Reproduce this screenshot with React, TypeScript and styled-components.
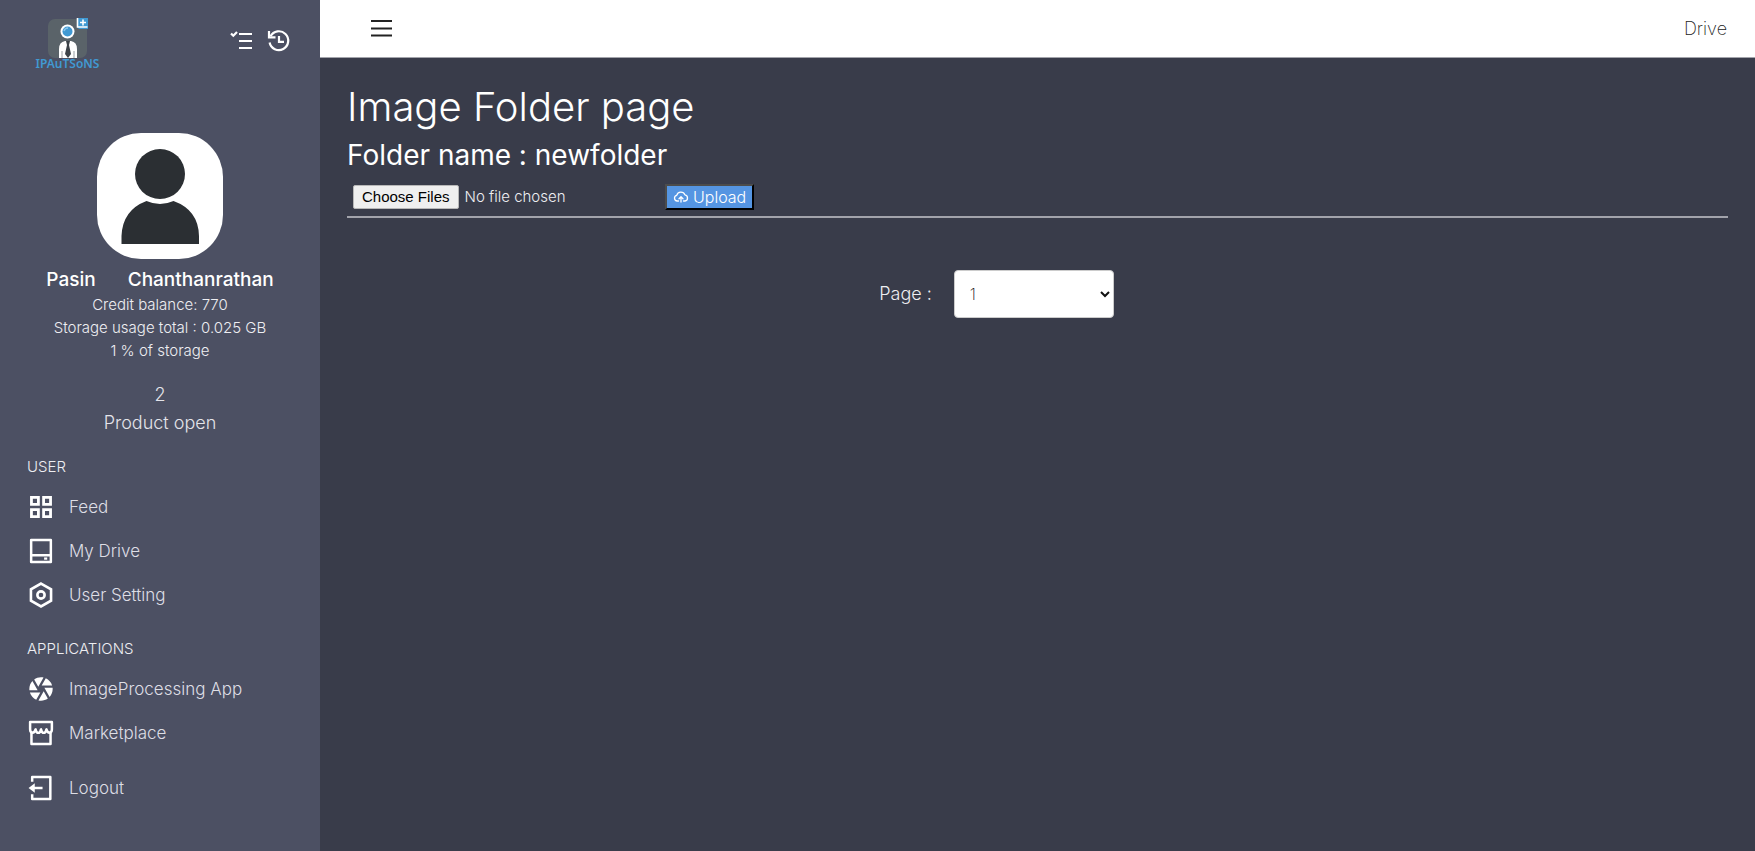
import React from "react";
import styled, { createGlobalStyle } from "styled-components";
import { RiCameraLensFill } from "react-icons/ri";

const GlobalStyle = createGlobalStyle`
  *, *::before, *::after { box-sizing: border-box; }
  body {
    margin: 0;
    background: #393c4a;
    color: #ffffff;
    font-family: Inter, "Open Sans", sans-serif;
    font-weight: 300;
    font-size: 16px;
    line-height: 24px;
  }
  h1, h2, h3, p, ul { margin: 0; padding: 0; }
`;

const Shell = styled.div`
  display: grid;
  grid-template-columns: 320px 1fr;
  min-height: 100vh;
`;

const Sidebar = styled.aside`
  background: #4c5063;
  padding: 16px 27px 32px;
`;

const Brand = styled.div`
  display: flex;
  justify-content: space-between;
  align-items: flex-start;
  height: 117px;
  padding: 0 2px 0 5px;
`;

const BrandActions = styled.div`
  display: flex;
  gap: 12px;
  padding: 12px 0 0;
`;

const IconButton = styled.button`
  display: flex;
  padding: 0;
  border: 0;
  background: none;
  color: inherit;
  cursor: pointer;
`;

const Profile = styled.section`
  display: flex;
  flex-direction: column;
  align-items: center;
  text-align: center;
`;

const Avatar = styled.svg`
  display: block;
  width: 126px;
  height: 126px;
  margin-bottom: 8px;
  border-radius: 44px;
  background: #ffffff;
`;

const Names = styled.h3`
  display: flex;
  gap: 32px;
  font-size: 19px;
  line-height: 26px;
  font-weight: 500;
`;

const Detail = styled.p`
  font-size: 15px;
  line-height: 23px;
  color: #eeeef2;
`;

const Products = styled.p`
  margin-top: 19px;
  font-size: 18px;
  line-height: 28px;
  color: #e4e4ea;
`;

const GroupTitle = styled.h3<{ $spaced?: boolean }>`
  margin-top: ${(p) => (p.$spaced ? 20 : 18)}px;
  font-size: 15px;
  line-height: 24px;
  font-weight: 300;
  color: #eeeef2;
`;

const Menu = styled.ul<{ $gap: number }>`
  list-style: none;
  margin-top: ${(p) => p.$gap}px;
`;

const MenuLink = styled.a`
  display: flex;
  align-items: center;
  gap: 14px;
  height: 44px;
  color: #dedee5;
  font-size: 17px;
  text-decoration: none;
  svg { width: 28px; height: 28px; color: #ffffff; }
`;

const Main = styled.div`
  display: flex;
  flex-direction: column;
  min-width: 0;
`;

const TopBar = styled.header`
  display: flex;
  align-items: center;
  justify-content: space-between;
  height: 58px;
  padding: 0 28px 0 48px;
  background: #ffffff;
  border-bottom: 1px solid #a3a4ab;
  color: #222222;
  font-size: 18px;
  font-weight: 200;
`;

const Content = styled.main`
  padding: 24px 27px;
`;

const Title = styled.h1`
  font-size: 40px;
  line-height: 50px;
  font-weight: 300;
`;

const FolderName = styled.h2`
  font-size: 28px;
  line-height: 46px;
  font-weight: 400;
`;

const UploadForm = styled.form`
  display: flex;
  align-items: center;
  justify-content: flex-start;
  padding: 6px;
  border-bottom: 2px solid #a2a3ab;
`;

const FileInput = styled.input`
  width: 312px;
  height: 26px;
  color: #eeeef2;
  font: 300 15px/24px Inter, "Open Sans", sans-serif;
  &::file-selector-button {
    height: 24px;
    margin: 1px 6px 1px 0;
    padding: 0 8px;
    border: 1px solid #b8b8b8;
    border-radius: 2px;
    background: #efefef;
    color: #000000;
    font: 400 15px/22px "Liberation Sans", Arial, sans-serif;
  }
`;

const UploadButton = styled.button`
  display: flex;
  align-items: center;
  gap: 4px;
  height: 26px;
  padding: 0 6px;
  border: 2px outset #000000;
  border-color: #4c4c4c #000000 #000000 #4c4c4c;
  background: #5595e2;
  color: #ffffff;
  font: 300 16px/22px Inter, "Open Sans", sans-serif;
`;

const Pager = styled.div`
  display: flex;
  align-items: center;
  justify-content: center;
  gap: 22px;
  margin-top: 52px;
  padding-right: 82px;
  font-size: 18px;
  color: #eeeef2;
`;

const PageSelect = styled.select`
  width: 160px;
  height: 48px;
  padding: 0 2px 0 11px;
  border: 1px solid #cccccc;
  border-radius: 4px;
  background: #ffffff;
  color: #111111;
  font: 200 16px/24px Inter, "Open Sans", sans-serif;
`;

const LogoText = styled.text`
  font: 600 12px "Noto Sans", "Open Sans", sans-serif;
  fill: #4199d2;
`;

const Logo = () => (
  <svg width="72" height="56" viewBox="0 0 72 56" role="img" aria-label="IPAuTSoNS">
    <rect x="16" y="3" width="39" height="39" rx="7" fill="#5a6369" />
    <path d="M45 2h11v11h-9l-2-2z" fill="#4199d2" />
    <path d="M45.500 2v9h10M51 3.500v6M48 6.500h6" fill="none" stroke="#fff" strokeWidth="1.6" />
    <path d="M27 42V33q0-7 6-8h6q6 1 6 8v9z" fill="#fff" />
    <path d="M34 25h4l-1 4 2 9-3 4-3-4 2-9z" fill="#3c4248" />
    <path d="M30 35v7M42 35v7" stroke="#9aa0a5" strokeWidth="1" />
    <circle cx="35.500" cy="15.500" r="7" fill="#fff" />
    <circle cx="35.500" cy="15.500" r="5" fill="#4199d2" />
    <path d="M32 15q1-3 4-3" fill="none" stroke="#8cc6ea" strokeWidth="1.500" />
    <LogoText x="35.500" y="52" textAnchor="middle">IPAuTSoNS</LogoText>
  </svg>
);

const ChecklistIcon = () => (
  <svg width="24" height="26" viewBox="0 0 24 26" fill="none" stroke="currentColor">
    <path d="M9 6h13M9 13h13M9 20h13" strokeWidth="2.200" />
    <path d="M1 5.500l2.300 2.300L7 4" strokeWidth="2.200" />
  </svg>
);

const HistoryIcon = () => (
  <svg width="25" height="26" viewBox="0 0 25 26" fill="none" stroke="currentColor" strokeWidth="2.200">
    <path d="M3.600 14.500A9.400 9.400 0 1 0 4.500 8.300" />
    <path d="M3 3v6.300h6.500" />
    <path d="M13 8v5.800h5" />
  </svg>
);

const CloudIcon = () => (
  <svg width="16" height="16" viewBox="0 0 16 16" fill="none" stroke="currentColor" strokeWidth="1.300" strokeLinecap="round" strokeLinejoin="round">
    <path d="M5.500 12H4.200a2.900 2.900 0 0 1-.5-5.700 4.300 4.300 0 0 1 8.200-.4A3.100 3.100 0 0 1 12 12h-1.500" />
    <path d="M8 13V8M6 9.700L8 7.700l2 2" />
  </svg>
);

const MenuIcon = () => (
  <svg width="26" height="26" viewBox="0 0 26 26" stroke="#222222" strokeWidth="1.800">
    <path d="M3 5h21M3 12.500h21M3 19.500h21" />
  </svg>
);

const FeedIcon = () => (
  <svg viewBox="0 0 27 27" fill="none" stroke="currentColor" strokeWidth="2.700">
    <path d="M4.300 4.300h6.700v6.700H4.300zM16 4.300h6.700v6.700H16zM4.300 16h6.700v6.700H4.300zM16 16h6.700v6.700H16z" />
  </svg>
);

const DriveIcon = () => (
  <svg viewBox="0 0 27 27" fill="none" stroke="currentColor" strokeWidth="2.400" strokeLinejoin="round">
    <path d="M4 3h19v21H4zM4 17.500h19" />
    <path d="M16.500 20.800h3" strokeWidth="2.200" />
  </svg>
);

const SettingIcon = () => (
  <svg viewBox="0 0 27 27" fill="none" stroke="currentColor" strokeWidth="2.500">
    <path d="M13.500 2.500l9.700 5.500v11l-9.700 5.500L3.800 19V8z" />
    <circle cx="13.500" cy="13.500" r="3.500" />
  </svg>
);

const StoreIcon = () => (
  <svg viewBox="0 0 27 27" fill="none" stroke="currentColor" strokeWidth="2.400" strokeLinejoin="round">
    <path d="M4.300 12v12h18.400V12" />
    <path d="M3 10V3h21v7c0 4-4 4.500-5.250 0-1 4.500-4.250 4.500-5.250 0-1 4.500-4.250 4.500-5.250 0C7 14.500 3 14 3 10z" />
  </svg>
);

const LogoutIcon = () => (
  <svg viewBox="0 0 27 27" fill="none" stroke="currentColor" strokeWidth="2.400" strokeLinejoin="round">
    <path d="M5 7.500V3h17.500v21H5v-4.500" />
    <path d="M6 13.500h9" />
    <path d="M1.500 13.500L7.500 9v9z" fill="currentColor" stroke="none" />
  </svg>
);

type LinkItem = { label: string; Icon: React.ComponentType };

const userLinks: LinkItem[] = [
  { label: "Feed", Icon: FeedIcon },
  { label: "My Drive", Icon: DriveIcon },
  { label: "User Setting", Icon: SettingIcon },
];

const appLinks: LinkItem[] = [
  { label: "ImageProcessing App", Icon: RiCameraLensFill },
  { label: "Marketplace", Icon: StoreIcon },
];

const logoutLinks: LinkItem[] = [{ label: "Logout", Icon: LogoutIcon }];

const MenuGroup = ({ links, gap }: { links: LinkItem[]; gap: number }) => (
  <Menu $gap={gap}>
    {links.map(({ label, Icon }) => (
      <li key={label}>
        <MenuLink href="#">
          <Icon />
          {label}
        </MenuLink>
      </li>
    ))}
  </Menu>
);

export default function App() {
  return (
    <>
      <GlobalStyle />
      <Shell>
        <Sidebar>
          <Brand>
            <Logo />
            <BrandActions>
              <IconButton aria-label="Tasks"><ChecklistIcon /></IconButton>
              <IconButton aria-label="History"><HistoryIcon /></IconButton>
            </BrandActions>
          </Brand>
          <Profile>
            <Avatar viewBox="0 0 126 126" role="img" aria-label="Profile picture">
              <circle cx="63" cy="41" r="25" fill="#2b2f33" />
              <path d="M24.500 111V103q1-26 25-35 13.500 6 27 0 25 9 25.500 35v8z" fill="#2b2f33" />
            </Avatar>
            <Names><span>Pasin</span><span>Chanthanrathan</span></Names>
            <Detail>Credit balance: 770</Detail>
            <Detail>Storage usage total : 0.025 GB</Detail>
            <Detail>1 % of storage</Detail>
            <Products>2<br />Product open</Products>
          </Profile>
          <nav>
            <GroupTitle>USER</GroupTitle>
            <MenuGroup links={userLinks} gap={6} />
            <GroupTitle $spaced>APPLICATIONS</GroupTitle>
            <MenuGroup links={appLinks} gap={6} />
            <MenuGroup links={logoutLinks} gap={11} />
          </nav>
        </Sidebar>
        <Main>
          <TopBar>
            <IconButton aria-label="Toggle menu"><MenuIcon /></IconButton>
            <span>Drive</span>
          </TopBar>
          <Content>
            <Title>Image Folder page</Title>
            <FolderName>Folder name : newfolder</FolderName>
            <UploadForm onSubmit={(e) => e.preventDefault()}>
              <FileInput type="file" multiple aria-label="Images to upload" />
              <UploadButton type="submit"><CloudIcon />Upload</UploadButton>
            </UploadForm>
            <Pager>
              <label htmlFor="page">Page :</label>
              <PageSelect id="page" defaultValue="1"><option>1</option></PageSelect>
            </Pager>
          </Content>
        </Main>
      </Shell>
    </>
  );
}
